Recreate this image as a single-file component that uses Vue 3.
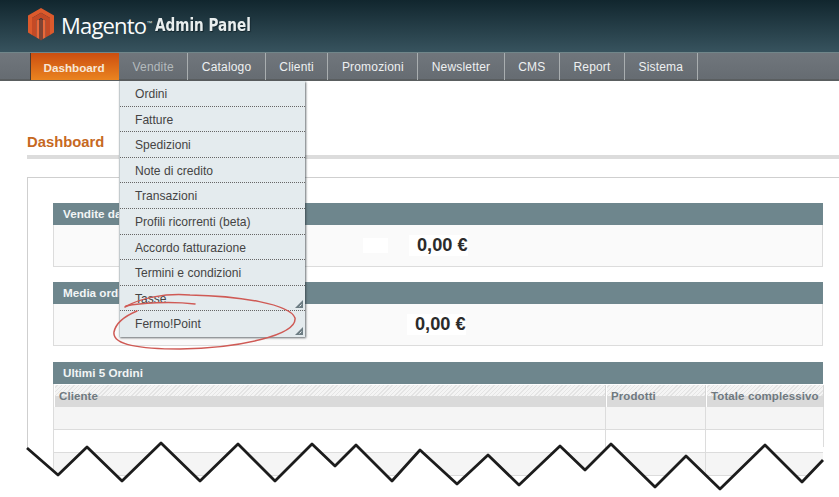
<script setup>
const nav = [
  { label: 'Dashboard', cls: 'active' },
  { label: 'Vendite', cls: 'open' },
  { label: 'Catalogo' },
  { label: 'Clienti' },
  { label: 'Promozioni' },
  { label: 'Newsletter' },
  { label: 'CMS' },
  { label: 'Report' },
  { label: 'Sistema' }
]
const menu = [
  { label: 'Ordini' },
  { label: 'Fatture' },
  { label: 'Spedizioni' },
  { label: 'Note di credito' },
  { label: 'Transazioni' },
  { label: 'Profili ricorrenti (beta)' },
  { label: 'Accordo fatturazione' },
  { label: 'Termini e condizioni' },
  { label: 'Tasse', sub: true },
  { label: 'Fermo!Point', sub: true }
]
const zig = '27,448 58,475 87,447 122,481 161,443 200,481 238,444 275,481 312,444 335,466 356,445 392,481 420,450 457,484 488,455 519,485 560,446 585,470 611,444 655,487 686,456 720,489 765,445 802,482 823,460'
const zigFill = zig + ' 823,447 839,447 839,497 27,497'
</script>

<template>
  <div class="page">
    <header class="head">
      <svg class="logo" width="28" height="33" viewBox="0 0 28 33">
        <polygon points="14,0 27,7.5 27,24.5 23,27 23,10 14,4.8 5,10 5,27 1,24.5 1,7.5" fill="#dc5a2c" />
        <polygon points="14,4.8 23,10 23,27 18.5,29.5 18.5,12.5 14,10 9.5,12.5 9.5,29.5 5,27 5,10" fill="#c44a26" />
        <polygon points="12,12 14,10.8 16,12 16,31 14,32.4 12,31" fill="#7f4434" />
        <polygon points="9.5,12.5 12,11.2 12,31 9.5,29.5" fill="#e9683a" />
        <polygon points="16,11.2 18.5,12.5 18.5,29.5 16,31" fill="#e9683a" />
      </svg>
      <span class="brand">Magento</span><span class="tm">™</span>
      <span class="panel">Admin Panel</span>
    </header>

    <nav class="nav">
      <a v-for="n in nav" :key="n.label" class="nav-item" :class="n.cls">{{ n.label }}</a>
    </nav>

    <main class="main">
      <h1 class="title">Dashboard</h1>
      <div class="box">
        <section class="sec">
          <h2 class="bar">Vendite dal sito</h2>
          <div class="amount"><i class="patch"></i><b class="a1">0,00 €</b></div>
        </section>
        <section class="sec">
          <h2 class="bar">Media ordini</h2>
          <div class="amount"><b class="a2">0,00 €</b></div>
        </section>
        <section class="sec last">
          <h2 class="bar">Ultimi 5 Ordini</h2>
          <div class="grid">
            <div class="th"><span>Cliente</span></div>
            <div class="th"><span>Prodotti</span></div>
            <div class="th"><span>Totale complessivo</span></div>
            <template v-for="r in 4" :key="r">
              <div class="td" :class="{ even: r % 2 }"></div>
              <div class="td" :class="{ even: r % 2 }"></div>
              <div class="td" :class="{ even: r % 2 }"></div>
            </template>
          </div>
        </section>
      </div>
    </main>

    <ul class="menu">
      <li v-for="m in menu" :key="m.label" class="menu-item">
        <span>{{ m.label }}</span>
        <svg v-if="m.sub" class="corner" width="8" height="8" viewBox="0 0 8 8">
          <polygon points="8,0 8,8 0,8" fill="#6d7d83" />
          <path d="M4.5 6.5 L6.5 4.5" stroke="#e4ebee" stroke-width="1" />
        </svg>
      </li>
    </ul>

    <svg class="overlay" width="839" height="497" viewBox="0 0 839 497">
      <g fill="none" stroke="#cf5a55" stroke-width="1.5" stroke-linecap="round">
        <path d="M125,307 C140,298 165,293 190,295 C240,296 290,304 295,318 C297,335 240,348 180,349 C140,349 112,345 114,332 C116,322 125,316 137,311" />
        <path d="M126,306 C140,303 170,301 195,304" />
      </g>
      <polygon :points="zigFill" fill="#fff" />
      <polyline :points="zig" fill="none" stroke="#1c1c1c" stroke-width="2.8" stroke-linejoin="round" class="zig" />
    </svg>
  </div>
</template>

<style>
html, body { margin: 0; background: #fff; }
</style>

<style scoped>
.page {
  position: relative;
  width: 839px;
  height: 497px;
  overflow: hidden;
  background: #fff;
  font-family: "Liberation Sans", Arial, sans-serif;
}
.head {
  height: 53px;
  box-sizing: border-box;
  display: flex;
  align-items: flex-start;
  padding: 8px 0 0 27px;
  background: linear-gradient(#11262e, #37535e);
  border-bottom: 1px solid #71868a;
}
.logo { flex: none; }
.brand {
  margin-left: 6px;
  margin-top: 2px;
  font-family: "Open Sans", sans-serif;
  font-weight: 400;
  font-size: 22px;
  line-height: 30px;
  letter-spacing: -0.8px;
  color: #fbfcfc;
}
.tm { font-size: 6px; color: #dfe5e5; margin-top: 12px; width: 9px; }
.panel {
  display: inline-block;
  font-family: "DejaVu Sans Condensed", "DejaVu Sans", sans-serif;
  font-weight: 700;
  font-size: 18px;
  line-height: 20px;
  color: #e9eeee;
  margin-top: 7px;
  transform: scaleX(0.84);
  transform-origin: left center;
  text-shadow: 1px 1px 1px #14252c;
}
.nav {
  height: 28px;
  box-sizing: border-box;
  display: flex;
  padding-left: 30px;
  background: linear-gradient(#70767c, #666c72);
  border-bottom: 2px solid #5a5e60;
}
.nav-item {
  box-sizing: border-box;
  height: 27px;
  padding: 0 13.5px;
  border-right: 1px solid #a9aeb0;
  font-size: 12px;
  line-height: 29px;
  letter-spacing: 0.18px;
  color: #eef0f1;
}
.nav-item.active {
  width: 89px;
  padding: 0 2px 0 0;
  text-align: center;
  border: 0;
  border-left: 1px solid #4a3a30;
  font-size: 11.7px;
  font-weight: 700;
  letter-spacing: 0;
  color: #f7e7d7;
  background: linear-gradient(#cc4e10, #ea8420);
}
.nav-item.open { color: #b4babd; }
.title {
  margin: 0 0 0 27px;
  padding: 53px 0 0;
  height: 78px;
  box-sizing: border-box;
  border-bottom: 4px solid #dcdcdc;
  font-size: 14.8px;
  line-height: 17px;
  color: #c6691f;
}
.box {
  margin: 18px 0 0 27px;
  padding: 25px 16px 0 25px;
  border: 1px solid #cfcfcf;
  border-right: 0;
  height: 400px;
  box-sizing: border-box;
}
.sec { margin-bottom: 15.5px; }
.sec:first-child { margin-bottom: 15px; }
.bar {
  margin: 0;
  height: 22px;
  padding-left: 10px;
  background: #6e868d;
  color: #f2f5f5;
  font-size: 11.7px;
  line-height: 21px;
  font-weight: 700;
}
.amount {
  box-sizing: border-box;
  height: 42px;
  background: #fafafa;
  border: 1px solid #dcdcdc;
  border-top: 0;
  display: flex;
  align-items: center;
}
.patch {
  width: 25px;
  height: 15px;
  margin-left: 309px;
  background: #fff;
}
.amount b {
  font-size: 18.2px;
  color: #2b2b2b;
  background: #fff;
  padding-left: 8px;
}
.a1 { margin-left: 21px; }
.a2 { margin-left: 353px; }
.grid {
  display: grid;
  grid-template-columns: 552px 100px 118px;
  grid-auto-rows: 23px;
  border-left: 1px solid #dcdcdc;
  box-sizing: border-box;
}
.th {
  height: 22px;
  margin-top: 1px;
  box-sizing: border-box;
  border-right: 1px solid #d6d6d6;
  padding-left: 5px;
  font-size: 11.5px;
  font-weight: 700;
  line-height: 22px;
  letter-spacing: 0.1px;
  color: #6f7980;
  background:
    linear-gradient(transparent 11px, #dadada 11px),
    repeating-linear-gradient(135deg, #f4f4f4 0 2px, #e4e4e4 2px 3px);
  box-shadow: inset 1px 0 #fff;
}
.td {
  box-sizing: border-box;
  border-right: 1px solid #dcdcdc;
  border-bottom: 1px solid #dcdcdc;
  background: #fff;
}
.td.even { background: #f5f5f5; }
.menu {
  position: absolute;
  left: 119px;
  top: 81px;
  width: 186px;
  margin: 0;
  padding: 0;
  list-style: none;
  background: #e4ebee;
  border-left: 1px solid #c4cbce;
  box-shadow: 1px 1px 2px rgba(40, 50, 55, 0.7);
  box-sizing: border-box;
}
.menu-item {
  position: relative;
  box-sizing: border-box;
  height: 25.6px;
  padding-left: 15px;
  font-size: 12.1px;
  line-height: 26px;
  color: #444;
  border-bottom: 1px dotted #666;
}
.menu-item:last-child { border-bottom: 0; }
.corner { position: absolute; right: 2px; bottom: 2px; }
.overlay { position: absolute; left: 0; top: 0; pointer-events: none; }
.zig { filter: blur(0.6px); }
</style>
